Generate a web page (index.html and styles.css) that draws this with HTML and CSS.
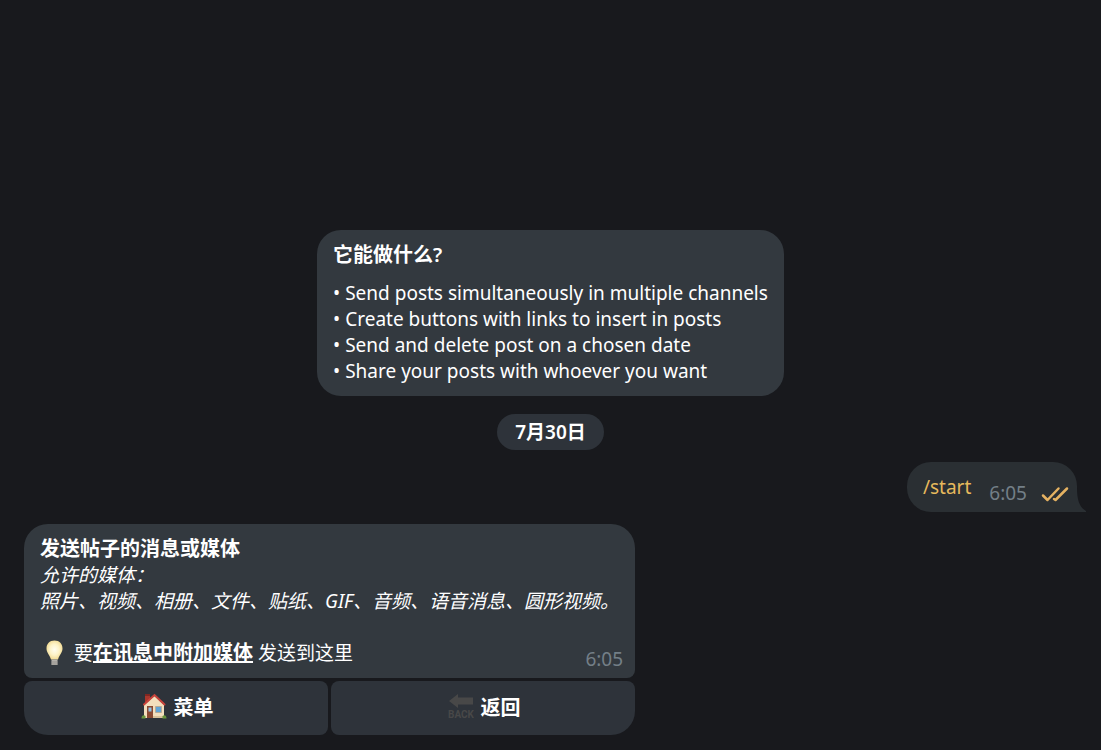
FILE: index.html
```html
<!DOCTYPE html>
<html lang="zh-CN">
<head>
    <meta charset="UTF-8">
    <meta name="viewport" content="width=device-width, initial-scale=1.0">
    <title>Chat</title>
    <link rel="stylesheet" href="styles.css">
</head>
<body>
    <main class="chat">
        <section class="about">
            <h1>它能做什么?</h1>
            <p>
                • Send posts simultaneously in multiple channels<br>
                • Create buttons with links to insert in posts<br>
                • Send and delete post on a chosen date<br>
                • Share your posts with whoever you want
            </p>
        </section>

        <div class="date">7月30日</div>

        <div class="message out">
            <a class="command" href="#start">/start</a>
            <time class="time">6:05</time>
            <svg class="checks" viewBox="0 0 28 16" aria-hidden="true">
                <path d="M2 9.500l4.500 4.500L17.500 2.500M13 13l1.500 1L26 2.500"/>
            </svg>
            <svg class="tail" viewBox="0 0 9 24" aria-hidden="true">
                <path d="M0 0C0 11 2 19 9 23V24H0z"/>
            </svg>
        </div>

        <div class="reply">
            <div class="message in">
                <p>
                    <b>发送帖子的消息或媒体</b><br>
                    <i>允许的媒体：<br>
                    照片、视频、相册、文件、贴纸、GIF、音频、语音消息、圆形视频。</i>
                </p>
                <div class="last-line">
                    <p class="hint">
                        <svg class="bulb" viewBox="0 0 28 26" aria-hidden="true">
                            <defs>
                                <radialGradient id="glow" cx="50%" cy="48%" r="58%">
                                    <stop offset="0" stop-color="#fffdf0"/>
                                    <stop offset="0.5" stop-color="#fdf3c8"/>
                                    <stop offset="1" stop-color="#efd587"/>
                                </radialGradient>
                            </defs>
                            <path fill="url(#glow)" d="M14.500 .5C9.500 .5 6.500 4 6.500 8.500c0 4 3 6 4.500 11h7c1.500-5 4.500-7 4.500-11 0-4.500-3-8-8-8z"/>
                            <path fill="#b5b2ac" d="M11.500 19.500h6v5.500h-6z"/>
                            <path fill="none" stroke="#96938e" d="M11.500 22h6M11.500 24h6"/>
                        </svg>
                        <span>要<b><u>在讯息中附加媒体</u></b> 发送到这里</span>
                    </p>
                    <time class="time">6:05</time>
                </div>
            </div>
            <div class="keyboard">
                <button type="button">
                    <svg class="emoji" viewBox="0 0 26 26" aria-hidden="true">
                        <path fill="#a9362c" d="M4 1h5v9H4z"/>
                        <path fill="#7f2722" d="M4 1h5v2H4z"/>
                        <path fill="#f3dfbd" d="M3 12L13.500 3 23 12v13H3z"/>
                        <path fill="none" stroke="#c7433b" stroke-width="2" stroke-linecap="round" d="M3 11.500L13.500 2 23.500 11.500"/>
                        <path fill="#8b4a32" d="M6 13h6v12H6z"/>
                        <path fill="#8fc3e6" d="M7.500 14.500h3v4h-3z"/>
                        <path fill="#62a5d6" stroke="#b6ab98" d="M14.500 13.500h6v6h-6z"/>
                        <path fill="#d8c29b" d="M12 23h11v2H12z"/>
                        <path fill="#68963c" d="M.5 25.500c0-3 2-4 4-2.500v2.500zM21.500 25.500V23c2-1.500 4-.5 4 2.500z"/>
                    </svg>
                    <span>菜单</span>
                </button>
                <button type="button">
                    <svg class="emoji" viewBox="0 0 26 26" aria-hidden="true">
                        <path fill="#484848" d="M1 8l9-7v3.500h15v7H10V15z"/>
                        <text class="back-text" x="13" y="25" text-anchor="middle">BACK</text>
                    </svg>
                    <span>返回</span>
                </button>
            </div>
        </div>
    </main>
</body>
</html>
```
FILE: styles.css
```css
* {
    box-sizing: border-box;
}
body {
    margin: 0;
    background: #18191d;
    color: #fff;
    font-family: "Noto Sans", "Noto Sans CJK SC", sans-serif;
    font-size: 19px;
    line-height: 26px;
}
h1, p {
    margin: 0;
}
b, h1, button {
    font-size: 20px;
    font-weight: 600;
}
.chat {
    min-height: 100vh;
    padding: 15px 24px;
    display: flex;
    flex-direction: column;
    justify-content: flex-end;
}
.about {
    align-self: center;
    padding: 12px 16px;
    border-radius: 24px;
    background: #33393f;
}
.about h1 {
    margin-bottom: 12px;
    line-height: 26px;
}
.date {
    align-self: center;
    margin: 18px 0 12px;
    padding: 5px 18px;
    border-radius: 18px;
    background: #2e333a;
    font-weight: 600;
}
.message {
    padding: 12px 16px;
    background: #33393f;
}
.time {
    color: #737f87;
}
.out {
    position: relative;
    align-self: flex-end;
    display: flex;
    padding-right: 8px;
    border-radius: 24px 24px 0 24px;
    background: #2a2f33;
}
.out .time {
    margin: 6px 14px -6px 18px;
}
.command {
    color: #e6b95c;
    text-decoration: none;
}
.checks {
    width: 28px;
    height: 16px;
    margin: 12px 0 -2px;
    fill: none;
    stroke: #e5b262;
    stroke-width: 2.5;
    stroke-linecap: round;
    stroke-linejoin: round;
}
.tail {
    position: absolute;
    left: 100%;
    bottom: 0;
    width: 9px;
    height: 24px;
    fill: #2a2f33;
}
.reply {
    align-self: flex-start;
    margin-top: 12px;
}
.in {
    border-radius: 24px 24px 8px 8px;
}
.last-line {
    display: flex;
    justify-content: space-between;
    margin: 26px -4px 0 0;
}
.last-line .time {
    margin: 6px 0 -6px;
}
.hint {
    display: flex;
    gap: 6px;
}
.bulb {
    width: 28px;
    height: 26px;
}
.keyboard {
    display: grid;
    grid-template-columns: 1fr 1fr;
    gap: 3px;
    margin-top: 3px;
}
.keyboard button {
    display: flex;
    align-items: center;
    justify-content: center;
    gap: 7px;
    height: 54px;
    padding: 0 14px 4px 16px;
    border: none;
    border-radius: 8px 8px 8px 24px;
    background: #2e333a;
    color: #fff;
    font-family: inherit;
    cursor: pointer;
}
.keyboard button:last-child {
    border-radius: 8px 8px 24px 8px;
}
.keyboard button:hover {
    background: #363c44;
}
.emoji {
    width: 26px;
    height: 26px;
}
.back-text {
    fill: #484848;
    font-family: Roboto, sans-serif;
    font-size: 10px;
    font-weight: 700;
}
```
